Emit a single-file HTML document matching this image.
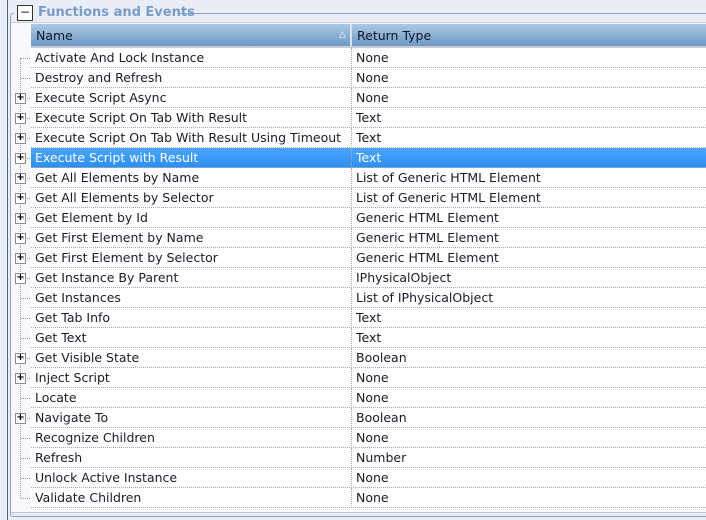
<!DOCTYPE html>
<html><head><meta charset="utf-8"><style>
*{margin:0;padding:0;box-sizing:border-box}
body{width:706px;height:520px;overflow:hidden;background:#e9edf5;font-family:"DejaVu Sans","Liberation Sans",sans-serif;font-size:12.5px;color:#1a1a2a;position:relative}
.vl{position:absolute;left:7px;top:0;width:1px;height:520px;background:#5a6373}
.fs{position:absolute;left:10px;top:13px;width:720px;height:504px;border:1px solid #8aa3c4;border-right:none;border-radius:3px 0 0 3px}
.inner{position:absolute;left:11px;top:22px;width:700px;height:491px;background:#f7f9fc;border-top:1px solid #c8d0dc;border-bottom:1px solid #b8c6d8}
.legend{position:absolute;left:14px;top:2px;background:#e9edf5;padding:0 5px 0 3px;height:20px}
.btn{position:absolute;left:3px;top:3px;width:16px;height:16px;border:1px solid #333;background:#fff;font-size:12px;line-height:12px;text-align:center}
.lt{position:absolute;left:21px;top:2px;color:#7a9cc8;font-weight:bold;font-size:13px;white-space:nowrap;position:relative;display:inline-block;margin-left:0}
.hdr{position:absolute;left:31px;top:24px;width:675px;height:24px;background:linear-gradient(#a9c9e4,#7098c7);border-bottom:2px solid #c9ccd0}
.hdr div{position:absolute;top:4px;color:#101828;font-size:12.5px}
.sep{position:absolute;left:319px !important;top:0 !important;width:2px;height:22px;background:#d8e4f0}
.rows{position:absolute;left:31px;top:48px;width:675px}
.r{height:20px;position:relative;border-bottom:1px dotted #a8a8a8;background:#fff}
.r span{position:absolute;top:2px;white-space:nowrap}
.r .a{left:4px}.r .b{left:325px}
.r:before{content:"";position:absolute;left:320px;top:0;height:20px;border-left:1px dotted #a8a8a8}
.r.sel{background:linear-gradient(#4aa6ff,#2e8ef0);color:#fff}
.tree{position:absolute;left:20px;top:58px;width:1px;height:440px;border-left:1px dotted #999}
.h{position:absolute;left:21px;width:9px;border-top:1px dotted #999}
.p{position:absolute;left:15px;width:11px;height:11px;border:1px solid #8a8a8a;background:#fff;font-size:10px;line-height:8px;text-align:center;color:#000;font-weight:bold}
</style></head><body>
<div class="vl"></div>
<div class="fs"></div>
<div class="inner"></div>
<div class="legend"><div class="btn">−</div><div class="lt">Functions and Events</div></div>
<div class="hdr"><div style="left:5px">Name</div><div style="left:308px;font-size:9px;top:6px;color:#fff">△</div><div class="sep"></div><div style="left:326px">Return Type</div></div>
<div class="tree"></div>
<div class="rows">
<div class="r"><span class="a">Activate And Lock Instance</span><span class="b">None</span></div>
<div class="r"><span class="a">Destroy and Refresh</span><span class="b">None</span></div>
<div class="r"><span class="a">Execute Script Async</span><span class="b">None</span></div>
<div class="r"><span class="a">Execute Script On Tab With Result</span><span class="b">Text</span></div>
<div class="r"><span class="a">Execute Script On Tab With Result Using Timeout</span><span class="b">Text</span></div>
<div class="r sel"><span class="a">Execute Script with Result</span><span class="b">Text</span></div>
<div class="r"><span class="a">Get All Elements by Name</span><span class="b">List of Generic HTML Element</span></div>
<div class="r"><span class="a">Get All Elements by Selector</span><span class="b">List of Generic HTML Element</span></div>
<div class="r"><span class="a">Get Element by Id</span><span class="b">Generic HTML Element</span></div>
<div class="r"><span class="a">Get First Element by Name</span><span class="b">Generic HTML Element</span></div>
<div class="r"><span class="a">Get First Element by Selector</span><span class="b">Generic HTML Element</span></div>
<div class="r"><span class="a">Get Instance By Parent</span><span class="b">IPhysicalObject</span></div>
<div class="r"><span class="a">Get Instances</span><span class="b">List of IPhysicalObject</span></div>
<div class="r"><span class="a">Get Tab Info</span><span class="b">Text</span></div>
<div class="r"><span class="a">Get Text</span><span class="b">Text</span></div>
<div class="r"><span class="a">Get Visible State</span><span class="b">Boolean</span></div>
<div class="r"><span class="a">Inject Script</span><span class="b">None</span></div>
<div class="r"><span class="a">Locate</span><span class="b">None</span></div>
<div class="r"><span class="a">Navigate To</span><span class="b">Boolean</span></div>
<div class="r"><span class="a">Recognize Children</span><span class="b">None</span></div>
<div class="r"><span class="a">Refresh</span><span class="b">Number</span></div>
<div class="r"><span class="a">Unlock Active Instance</span><span class="b">None</span></div>
<div class="r"><span class="a">Validate Children</span><span class="b">None</span></div>
</div>
<div id="marks"></div>
<script>
var plus=[2,3,4,5,6,7,8,9,10,11,15,16,18];var h='';
for(var i=0;i<23;i++){var y=58+i*20;
if(plus.indexOf(i)>=0){h+='<div class="p" style="top:'+(y-5)+'px">+</div>';}
h+='<div class="h" style="top:'+y+'px"></div>';}
document.getElementById('marks').innerHTML=h;
</script>
</body></html>
